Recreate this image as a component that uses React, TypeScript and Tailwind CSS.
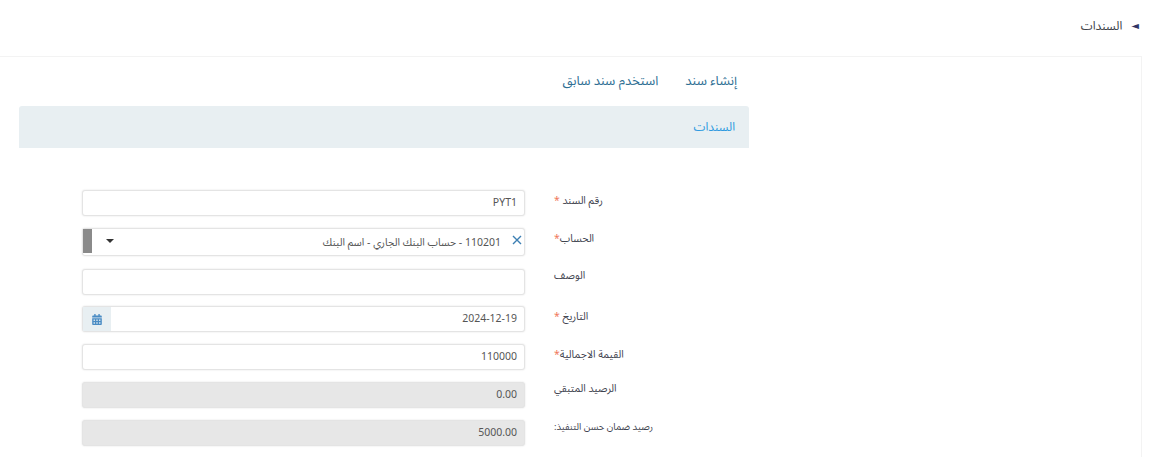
import { FaCalendarAlt } from "react-icons/fa";

const font = "font-['Noto_Sans_Arabic','DejaVu_Sans','Noto_Sans',sans-serif]";

function Star() {
  return <span className="text-[#f0795b]">*</span>;
}

function Field({ label, star, spaced, children, rowClass, labelClass = "text-[10.5px]" }: any) {
  return (
    <div className={`flex items-start ${rowClass}`}>
      <label
        className={`w-[128px] shrink-0 pl-[29px] text-left leading-[20px] text-[#3f4450] whitespace-nowrap ${labelClass} ${
          star ? "mt-px" : "-mt-[3px]"
        }`}
      >
        {label}
        {star && (spaced ? " " : "")}
        {star && <Star />}
      </label>
      {children}
    </div>
  );
}

function TextBox({ value, disabled }: { value?: string; disabled?: boolean }) {
  return (
    <div
      className={`w-[443px] h-[26px] px-[7px] rounded-[3px] border border-[#e4e4e4] shadow-[0_0_2px_rgba(0,0,0,0.12)] text-[10.5px] leading-[24px] text-[#555] ${
        disabled ? "bg-[#e7e7e7]" : "bg-white"
      }`}
    >
      {value}
    </div>
  );
}

export default function App() {
  return (
    <div dir="rtl" className={`w-[1155px] h-[457px] overflow-hidden bg-white ${font}`}>
      {/* Breadcrumb */}
      <div className="h-[56px] flex items-center pr-[16px] pb-[2px] text-[12px] text-[#3d4149] gap-[9px]">
        <span className="text-[10px] text-[#2f3566] -mt-[3px]">◄</span>
        <span>السندات</span>
      </div>

      <div className="w-[1142px] mr-[13px] h-[401px] border-t border-r border-[#f3f3f3] flex justify-end">
        <div className="w-[730px] ml-[19px]">
          {/* Tabs */}
          <div className="h-[49px] flex items-center gap-[27px] pr-[12px] pt-px text-[13px] text-[#2f6f94]">
            <span>إنشاء سند</span>
            <span>استخدم سند سابق</span>
          </div>

          {/* Section header */}
          <div className="h-[42px] bg-[#e8eff2] rounded-t-[3px] flex items-center pr-[14px] pt-px text-[12px] text-[#2e9ae0]">
            السندات
          </div>

          {/* Form */}
          <div className="pt-[42px] pr-[96px]">
            <Field label="رقم السند" star spaced rowClass="mb-[12px]">
              <TextBox value="PYT1" />
            </Field>

            <Field label="الحساب" star rowClass="mb-[13px]">
              <div className="w-[443px] h-[28px] bg-white rounded-[3px] border border-[#e4e4e4] shadow-[0_0_2px_rgba(0,0,0,0.12)] flex items-stretch text-[10.5px] text-[#555]">
                <svg viewBox="0 0 10 10" className="w-[10px] h-[10px] mr-[2px] mt-[6px] shrink-0 text-[#3d7fb3]" fill="none" stroke="currentColor" strokeWidth="1.4">
                  <path d="M1 1l8 8M9 1l-8 8" />
                </svg>
                <span className="flex-1 pr-[11px] leading-[28px]">110201 - حساب البنك الجاري - اسم البنك</span>
                <span className="ml-[14px] self-center w-0 h-0 border-x-[4px] border-x-transparent border-t-[4px] border-t-[#333] -mt-[2px]" />
                <span className="w-[9px] bg-[#8a8a8a] mb-[2px]" />
              </div>
            </Field>

            <Field label="الوصف" rowClass="mb-[11px]">
              <TextBox />
            </Field>

            <Field label="التاريخ" star spaced rowClass="mb-[12px]">
              <div className="w-[443px] h-[26px] bg-white rounded-[3px] border border-[#e4e4e4] shadow-[0_0_2px_rgba(0,0,0,0.12)] flex text-[10.5px] text-[#555]">
                <span className="flex-1 pr-[7px] leading-[24px] text-right" dir="ltr">
                  2024-12-19
                </span>
                <span className="w-[28px] bg-[#e8eff2] flex items-center justify-center">
                  <FaCalendarAlt className="w-[10px] h-[11px] text-[#4a8cc4]" />
                </span>
              </div>
            </Field>

            <Field label="القيمة الاجمالية" star rowClass="mb-[12px]">
              <TextBox value="110000" />
            </Field>

            <Field label="الرصيد المتبقي" rowClass="mb-[12px]">
              <TextBox value="0.00" disabled />
            </Field>

            <Field label="رصيد ضمان حسن التنفيذ:" labelClass="text-[9.5px]">
              <TextBox value="5000.00" disabled />
            </Field>
          </div>
        </div>
      </div>
    </div>
  );
}
